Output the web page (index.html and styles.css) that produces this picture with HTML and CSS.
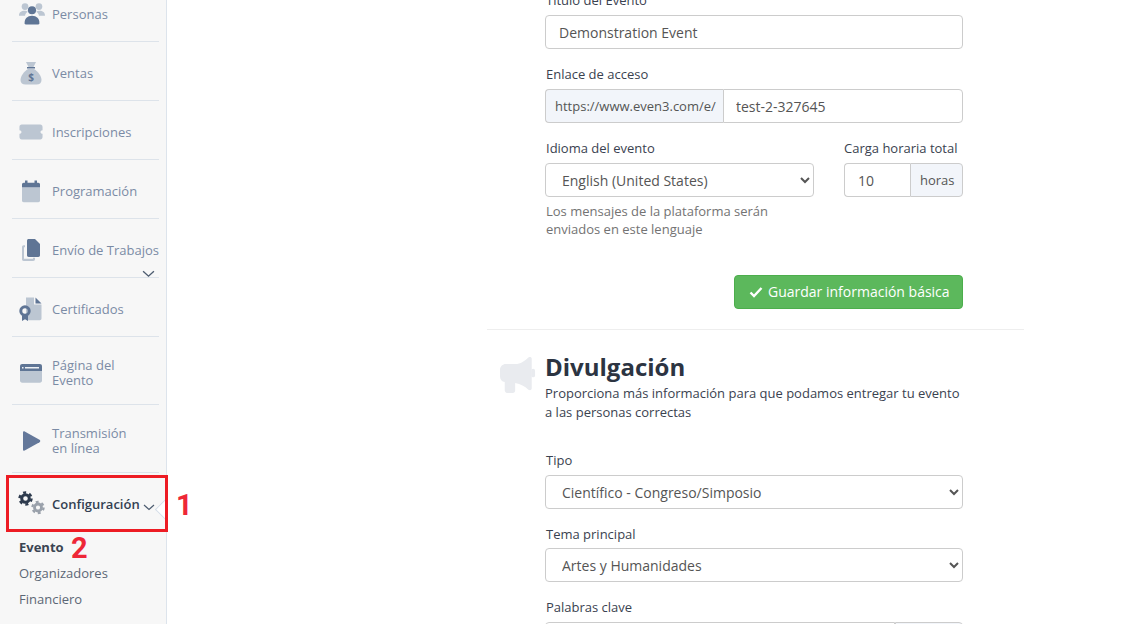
FILE: index.html
```html
<!DOCTYPE html>
<html lang="es">
<head>
<meta charset="utf-8">
<title>Configuración del evento</title>
<link rel="stylesheet" href="styles.css">
</head>
<body>
<div class="page">
  <aside class="sidebar">
    <a class="nav-row">
      <svg class="nav-icon" viewBox="0 0 28 24"><circle cx="6.500" cy="4" r="3.600" fill="#bcc6d2"/><circle cx="21.500" cy="4" r="3.600" fill="#bcc6d2"/><path d="M0 14c0-4 2.500-5.500 6-5.500 1.500 0 2.500.3 3.500 1-1.800 1-2.800 2.500-3 4.500H0zM28 14c0-4-2.500-5.500-6-5.500-1.500 0-2.500.3-3.500 1 1.800 1 2.800 2.500 3 4.500H28z" fill="#bcc6d2"/><circle cx="14" cy="8" r="4.400" fill="#5f7595"/><path d="M6 22c0-5 3-8 8-8s8 3 8 8c0 .8-.5 1.200-1.200 1.200H7.200C6.500 23.200 6 22.800 6 22z" fill="#5f7595"/></svg>
      <span>Personas</span>
    </a>
    <a class="nav-row">
      <svg class="nav-icon" viewBox="0 0 24 24"><path d="M7 1h10l-2.500 5h-5z" fill="#bcc6d2"/><rect x="8" y="6" width="8" height="1.500" fill="#5f7595"/><path d="M9 8h6c4 2.500 7.500 7 7.500 11 0 3-2 4.500-5 4.500h-11c-3 0-5-1.500-5-4.500C1.500 15 5 10.500 9 8z" fill="#bcc6d2"/><text x="12" y="20" class="dollar">$</text></svg>
      <span>Ventas</span>
    </a>
    <a class="nav-row">
      <svg class="nav-icon" viewBox="0 0 26 24"><path d="M3 4h20c1.500 0 2.500 1 2.500 2.500V10c-1.200 0-2.200 1-2.200 2s1 2 2.200 2v3.500c0 1.500-1 2.500-2.500 2.500H3c-1.500 0-2.500-1-2.500-2.500V14c1.200 0 2.200-1 2.200-2s-1-2-2.200-2V6.500C.5 5 1.500 4 3 4z" fill="#bcc6d2"/></svg>
      <span>Inscripciones</span>
    </a>
    <a class="nav-row">
      <svg class="nav-icon" viewBox="0 0 24 24"><path d="M3 9h18v12.500c0 1-.7 1.700-1.700 1.700H4.700C3.700 23.200 3 22.500 3 21.500z" fill="#bcc6d2"/><path d="M3 8.500V5.500C3 4.500 3.700 3.800 4.700 3.800H6V1.500h2.500v2.300h7V1.500H18v2.300h1.300c1 0 1.700.7 1.700 1.700v3z" fill="#5f7595"/></svg>
      <span>Programación</span>
    </a>
    <a class="nav-row has-more">
      <svg class="nav-icon" viewBox="0 0 24 24"><path d="M3 9c0-1 .7-1.700 1.700-1.700H6v2H5v11.500h9v-1h2v1.500c0 1-.7 1.700-1.700 1.700H4.700c-1 0-1.700-.7-1.700-1.700z" fill="#bcc6d2"/><path d="M8 2.700C8 1.700 8.700 1 9.700 1H16l5 5v11.300c0 1-.7 1.700-1.700 1.700H9.700c-1 0-1.700-.7-1.700-1.700z" fill="#5f7595"/></svg>
      <span>Envío de Trabajos</span>
      <svg class="more" viewBox="0 0 12 7"><path d="M1 1l5 4.500L11 1" fill="none" stroke="#4d5c70" stroke-width="1.300"/></svg>
    </a>
    <a class="nav-row">
      <svg class="nav-icon" viewBox="0 0 24 24"><path d="M7 .5h8v7h7.500v14c0 1-.7 1.700-1.700 1.700H8.700c-1 0-1.700-.7-1.700-1.700z" fill="#bcc6d2"/><path d="M16.500.5l6 6h-6z" fill="#5f7595"/><circle cx="6" cy="14" r="4.200" fill="none" stroke="#5f7595" stroke-width="3"/><path d="M3 18.500v5.500l3-1.800 3 1.800v-5.500z" fill="#5f7595"/></svg>
      <span>Certificados</span>
    </a>
    <a class="nav-row tall">
      <svg class="nav-icon" viewBox="0 0 24 24"><path d="M1 10h22v9.500c0 1.300-.9 2.200-2.200 2.200H3.200C1.900 21.700 1 20.800 1 19.500z" fill="#bcc6d2"/><path d="M3.200 3h17.600C22.100 3 23 3.900 23 5.200V10H1V5.200C1 3.900 1.900 3 3.200 3z" fill="#5f7595"/><rect x="6" y="6" width="14" height="1.500" fill="#eef1f5"/><rect x="3" y="6" width="1.500" height="1.500" fill="#eef1f5"/></svg>
      <span>Página del<br>Evento</span>
    </a>
    <a class="nav-row tall">
      <svg class="nav-icon" viewBox="0 0 24 24"><path d="M4 3.500c0-1 .9-1.500 1.700-1.100l14.800 8.300c1 .6 1 2 0 2.600L5.700 21.600C4.900 22 4 21.500 4 20.500z" fill="#64789a"/></svg>
      <span>Transmisión<br>en línea</span>
    </a>
    <a class="nav-row active">
      <svg class="gears" viewBox="0 0 28 24">
        <circle cx="7.500" cy="7.500" r="3.800" fill="none" stroke="#2d3a4d" stroke-width="3"/>
        <circle cx="7.500" cy="7.500" r="6" fill="none" stroke="#2d3a4d" stroke-width="2.400" stroke-dasharray="3.100 3.180"/>
        <circle cx="20" cy="16.500" r="3.500" fill="none" stroke="#9aa1ab" stroke-width="2.800"/>
        <circle cx="20" cy="16.500" r="5.600" fill="none" stroke="#9aa1ab" stroke-width="2.200" stroke-dasharray="2.900 2.960"/>
      </svg>
      <span>Configuración</span>
      <svg class="more-inline" viewBox="0 0 12 7"><path d="M1 1l5 4.500L11 1" fill="none" stroke="#4d5c70" stroke-width="1.200"/></svg>
      <i class="caret"></i>
    </a>
    <nav class="subnav">
      <a class="current">Evento</a>
      <a>Organizadores</a>
      <a>Financiero</a>
    </nav>
    <div class="mark-box"></div>
    <b class="mark mark-one">1</b>
    <b class="mark mark-two">2</b>
  </aside>

  <main class="main">
    <form class="form">
      <div class="field">
        <label>Título del Evento</label>
        <input class="control" type="text" value="Demonstration Event">
      </div>
      <div class="field">
        <label>Enlace de acceso</label>
        <div class="group">
          <span class="addon addon-url">https://www.even3.com/e/</span>
          <input class="control joined-left" type="text" value="test-2-327645">
        </div>
      </div>
      <div class="split">
        <div class="field grow">
          <label>Idioma del evento</label>
          <select class="control select"><option>English (United States)</option></select>
          <p class="help">Los mensajes de la plataforma serán<br>enviados en este lenguaje</p>
        </div>
        <div class="field hours">
          <label>Carga horaria total</label>
          <div class="group">
            <input class="control joined-right" type="text" value="10">
            <span class="addon addon-hours">horas</span>
          </div>
        </div>
      </div>
      <div class="actions">
        <button type="button" class="save">
          <svg class="check" viewBox="0 0 14 12"><path d="M1.500 6.500L5 10l7.500-8" fill="none" stroke="#fff" stroke-width="2.400"/></svg>
          Guardar información básica
        </button>
      </div>
      <hr class="divider">
      <header class="section-head">
        <svg class="megaphone" viewBox="0 0 38 38"><path d="M30 1c1.500-1 3.500-.5 3.500 1.500v31c0 2-2 2.500-3.500 1.500-4-3.500-8-6-14-7v8c0 1.500-1 2.500-2.500 2.500h-6C6 38 5 37 5 35.500V27c-3-.5-5-3-5-6v-7c0-3.500 3-6 6-6h10c6 0 10-3.500 14-7z" fill="#e9ebef"/><rect x="33" y="13" width="4" height="9" rx="2" fill="#e9ebef"/></svg>
        <div>
          <h2>Divulgación</h2>
          <p>Proporciona más información para que podamos entregar tu evento<br>a las personas correctas</p>
        </div>
      </header>
      <div class="field">
        <label>Tipo</label>
        <select class="control select"><option>Científico - Congreso/Simposio</option></select>
      </div>
      <div class="field close-label">
        <label>Tema principal</label>
        <select class="control select"><option>Artes y Humanidades</option></select>
      </div>
      <div class="field">
        <label>Palabras clave</label>
        <div class="group">
          <input class="control joined-right" type="text">
          <span class="addon addon-keys"></span>
        </div>
      </div>
    </form>
  </main>
</div>
</body>
</html>
```
FILE: styles.css
```css
* { box-sizing: border-box; }
html, body { margin: 0; height: 624px; overflow: hidden; background: #fff; }
body { font-family: "Open Sans", "Liberation Sans", sans-serif; font-size: 13px; color: #333b47; }

.page { display: flex; height: 624px; overflow: hidden; }

.sidebar {
  position: relative;
  flex: 0 0 167px;
  width: 167px;
  min-width: 0;
  height: 624px;
  background: #f7f7f7;
  border-right: 1px solid #dde4ec;
  padding: 0 7px 0 12px;
}

.nav-row {
  position: relative;
  display: flex;
  align-items: center;
  height: 59px;
  padding-top: 4px;
  border-bottom: 1px solid #dde3ea;
  color: #7b8ba5;
  font-size: 13px;
  line-height: 15px;
  white-space: nowrap;
}
.nav-row:first-child { margin-top: -17px; }
.nav-row.tall { height: 68px; }
.nav-row.active { border-bottom: 0; height: 66px; color: #333f52; font-weight: 600; padding: 0 0 4px; }

.nav-icon { flex: 0 0 24px; width: 24px; height: 24px; margin: 0 9px 0 7px; }
.nav-row:first-child .nav-icon { flex-basis: 26px; width: 26px; margin: 0 7px 0 7px; }
.dollar { font: bold 10px "Open Sans", sans-serif; fill: #5f7595; text-anchor: middle; }
.more { position: absolute; right: 4px; bottom: -1px; width: 13px; height: 8px; }
.gears { flex: 0 0 28px; width: 28px; height: 24px; margin: -2px 6px 0 6px; }
.more-inline { flex: 0 0 12px; width: 12px; height: 7px; margin: 6px 0 0 3px; }
.caret {
  position: absolute;
  right: -14px;
  top: 29px;
  width: 15px;
  height: 15px;
  background: #fff;
  border-left: 1px solid #d5dee8;
  border-bottom: 1px solid #d5dee8;
  transform: rotate(45deg);
}

.subnav { display: flex; flex-direction: column; gap: 8px; margin: -1px 0 0 7px; line-height: 18px; color: #5c6675; }
.subnav a { display: block; }
.subnav .current { font-weight: 700; color: #3a4452; }

.mark-box { position: absolute; left: 6px; top: 475px; width: 162px; height: 57px; border: 3px solid #ed1c24; z-index: 2; }
.mark { position: absolute; z-index: 3; font: 700 29px/32px Roboto, "Liberation Sans", sans-serif; color: #ee2737; }
.mark-one { left: 176px; top: 489px; }
.mark-two { left: 71px; top: 532px; }

.main { flex: 1; min-width: 0; }
.form { width: 537px; margin: -9px 0 0 320px; padding: 0 61px 0 58px; }

.field { margin: 0 0 16px; }
.field label { display: block; font-size: 13px; line-height: 18px; margin: 0 0 6px 1px; color: #3a4250; }
.field.close-label label { margin-bottom: 5px; }

.control {
  display: block;
  width: 100%;
  height: 34px;
  border: 1px solid #ccc;
  border-radius: 4px;
  background: #fff;
  color: #555;
  font: 14px/20px "Open Sans", "Liberation Sans", sans-serif;
  padding: 6px 13px;
  outline: 0;
}
.select { padding-left: 12px; }

.group { display: flex; height: 34px; }
.group .control { flex: 1; min-width: 0; }
.joined-left { border-radius: 0 4px 4px 0; padding-left: 12px; }
.joined-right { border-radius: 4px 0 0 4px; }
.addon {
  display: flex;
  align-items: center;
  background: #f2f5fa;
  border: 1px solid #ccc;
  color: #555;
  font-size: 13px;
  white-space: nowrap;
}
.addon-url { flex: 0 0 178px; padding-left: 9px; border-right: 0; border-radius: 4px 0 0 4px; }
.addon-hours { flex: 0 0 53px; padding-left: 9px; border-radius: 0 4px 4px 0; }
.addon-keys { flex: 0 0 68px; border-radius: 0 4px 4px 0; }

.split { display: flex; gap: 30px; }
.grow { flex: 1; min-width: 0; }
.hours { flex: 0 0 119px; }
.hours label { margin-left: 0; white-space: nowrap; }
.hours .joined-right { border-right: 0; }
.help { margin: 5px 0 0 1px; font-size: 13px; line-height: 18px; color: #737373; }

.actions { display: flex; justify-content: flex-end; margin-top: 21px; }
.save {
  display: flex;
  align-items: center;
  gap: 5px;
  width: 229px;
  height: 34px;
  padding: 0 0 0 14px;
  border: 1px solid #4cae4c;
  border-radius: 4px;
  background: #5cb85c;
  color: #fff;
  font: 14px/20px "Open Sans", "Liberation Sans", sans-serif;
}
.check { width: 14px; height: 12px; }

.divider { border: 0; border-top: 1px solid #eee; margin: 20px -61px 0 -58px; }

.section-head { display: flex; margin: 20px 0 29px -45px; }
.megaphone { flex: 0 0 36px; width: 36px; height: 37px; margin: 6px 9px 0 0; }
.section-head h2 { margin: 0 0 1px; font-size: 24px; line-height: 33px; font-weight: 700; color: #2c3442; }
.section-head p { margin: 0; font-size: 13px; line-height: 19px; color: #3a4250; }
```
